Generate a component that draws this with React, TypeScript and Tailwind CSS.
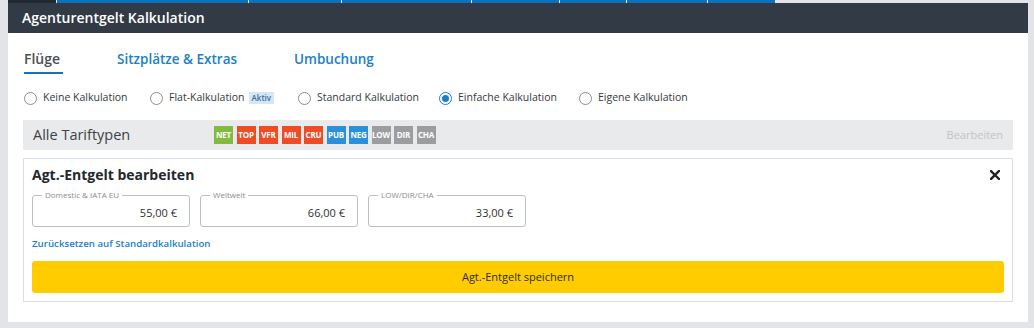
import React from "react";

const topTabs = [
  { w: 48, color: "bg-[#1f2933]" },
  { w: 192, color: "bg-[#0b72bd]" },
  { w: 93, color: "bg-[#0b72bd]" },
  { w: 130, color: "bg-[#0b72bd]" },
  { w: 88, color: "bg-[#0b72bd]" },
  { w: 67, color: "bg-[#0b72bd]" },
  { w: 81, color: "bg-[#0b72bd]" },
  { w: 68, color: "bg-[#0b72bd]" },
];

const badges = [
  { label: "NET", color: "bg-[#83bb3f]" },
  { label: "TOP", color: "bg-[#ef4b25]" },
  { label: "VFR", color: "bg-[#ef4b25]" },
  { label: "MIL", color: "bg-[#ef4b25]" },
  { label: "CRU", color: "bg-[#ef4b25]" },
  { label: "PUB", color: "bg-[#2b90dc]" },
  { label: "NEG", color: "bg-[#2b90dc]" },
  { label: "LOW", color: "bg-[#9b9d9f]" },
  { label: "DIR", color: "bg-[#9b9d9f]" },
  { label: "CHA", color: "bg-[#9b9d9f]" },
];

// fixed widths keep the radios where the reference has them
const options = [
  { label: "Keine Kalkulation", w: "w-[126px]" },
  { label: "Flat-Kalkulation", w: "w-[148px]", aktiv: true },
  { label: "Standard Kalkulation", w: "w-[141px]" },
  { label: "Einfache Kalkulation", w: "w-[140px]", checked: true },
  { label: "Eigene Kalkulation", w: "" },
];

const fees = [
  { label: "Domestic & IATA EU", value: "55,00 €" },
  { label: "Weltweit", value: "66,00 €" },
  { label: "LOW/DIR/CHA", value: "33,00 €" },
];

const Radio = ({ checked }: { checked?: boolean }) =>
  checked ? (
    <span className="w-[13px] h-[13px] rounded-full border border-[#1a7fc6] flex items-center justify-center shrink-0">
      <span className="w-[7px] h-[7px] rounded-full bg-[#1a7fc6]" />
    </span>
  ) : (
    <span className="w-[13px] h-[13px] rounded-full border border-[#8a8d90] bg-white shrink-0" />
  );

export default function App() {
  return (
    <div className="w-[1034px] h-[328px] bg-[#e3e4e8] flex flex-col font-['Open_Sans',sans-serif] overflow-hidden">
      {/* outer tab strip */}
      <div className="h-[3px] flex pl-[8px] shrink-0">
        {topTabs.map((t, i) => (
          <div key={i} className={`${t.color} h-full ${i > 0 ? "border-l border-[#d9e6f2]" : ""}`} style={{ width: t.w }} />
        ))}
      </div>

      <div className="ml-[8px] w-[1020px] h-[319px] bg-white flex flex-col shrink-0">
        <div className="h-[30px] shrink-0 bg-[#323b45] flex items-center pl-[14px]">
          <span className="text-white text-[14px] font-semibold leading-none">Agenturentgelt Kalkulation</span>
        </div>

        <div className="px-[15px] flex flex-col">
          {/* tabs */}
          <div className="flex pl-[1px] pt-[16px]">
            <div className="w-[39px] border-b-2 border-[#1a72b8] pb-[3px] text-[14px] leading-[20px] font-semibold text-[#4a4f55]">Flüge</div>
            <div className="ml-[54px] w-[177px] pb-[3px] text-[13.5px] leading-[20px] font-semibold text-[#1a80c8]">Sitzplätze &amp; Extras</div>
            <div className="pb-[3px] text-[13.5px] leading-[20px] font-semibold text-[#1a80c8]">Umbuchung</div>
          </div>

          {/* calculation type */}
          <div className="flex items-center pl-[1px] mt-[16px] h-[16px]">
            {options.map((o) => (
              <div key={o.label} className={`flex items-center ${o.w}`}>
                <Radio checked={o.checked} />
                <span className="ml-[6px] text-[10.5px] text-[#333a40]">{o.label}</span>
                {o.aktiv && (
                  <span className="ml-[4px] px-[3px] bg-[#d3e7f7] text-[#3e6c91] text-[8px] leading-[12px] font-semibold">Aktiv</span>
                )}
              </div>
            ))}
          </div>

          {/* tariff types bar */}
          <div className="mt-[14px] h-[30px] bg-[#e8eaeb] flex items-center pl-[10px] pr-[10px]">
            <span className="w-[181px] text-[14.5px] text-[#3c4248]">Alle Tariftypen</span>
            <div className="flex gap-[3.5px]">
              {badges.map((b) => (
                <span key={b.label} className={`${b.color} w-[19px] h-[18px] flex items-center justify-center text-white text-[8px] font-bold tracking-[-0.2px]`}>
                  {b.label}
                </span>
              ))}
            </div>
            <span className="ml-auto text-[11px] text-[#c2c4c6]">Bearbeiten</span>
          </div>

          {/* edit card */}
          <div className="mt-[8px] border border-[#dcdddf] px-[8px] pt-[6px] pb-[8px] flex flex-col">
            <div className="flex items-center justify-between h-[20px]">
              <span className="text-[14px] font-bold text-[#23282d] leading-[20px]">Agt.-Entgelt bearbeiten</span>
              <svg className="w-[10px] h-[10px] mr-[4px]" viewBox="0 0 10 10">
                <path d="M1 1L9 9M9 1L1 9" stroke="#1f2328" strokeWidth="2.4" strokeLinecap="square" />
              </svg>
            </div>

            <div className="flex gap-[10px] mt-[5px]">
              {fees.map((f) => (
                <fieldset key={f.label} className="w-[158px] border border-[#bdbfc1] rounded-[3px]">
                  <legend className="ml-[9px] px-[3px] text-[8px] leading-[10px] text-[#8a8d90]">{f.label}</legend>
                  <div className="h-[26px] flex items-center justify-end pr-[12px] text-[11px] text-[#2b3035]">{f.value}</div>
                </fieldset>
              ))}
            </div>

            <a className="mt-[10px] text-[9.7px] leading-[14px] font-semibold text-[#1a80c8]">Zurücksetzen auf Standardkalkulation</a>

            <button className="mt-[10px] h-[32px] bg-[#ffcc00] rounded-[3px] text-[11px] text-[#2b2f33]">Agt.-Entgelt speichern</button>
          </div>
        </div>
      </div>
    </div>
  );
}
